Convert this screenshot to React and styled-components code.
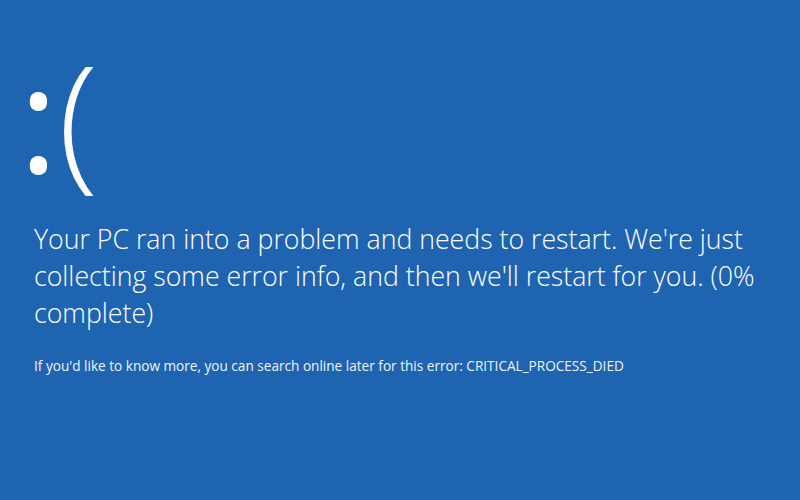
import React from "react";
import styled, { createGlobalStyle } from "styled-components";

const GlobalStyle = createGlobalStyle`
  html, body {
    margin: 0;
    padding: 0;
    background: #1f64b1;
  }
`;

const Screen = styled.div`
  width: 800px;
  height: 500px;
  box-sizing: border-box;
  background: #1f64b1;
  color: #ffffff;
  font-family: "Open Sans", "Noto Sans", sans-serif;
  padding: 26px 0 0 34px;
  display: flex;
  flex-direction: column;
  overflow: hidden;
`;

const Face = styled.div`
  font-size: 148px;
  line-height: 180px;
  height: 194px;
  margin-left: -15px;
  white-space: nowrap;
`;

const Glyph = styled.span`
  font-weight: ${(p) => p.$weight};
`;

const Message = styled.div`
  font-size: 26.7px;
  font-weight: 300;
  line-height: 37px;
  display: flex;
  flex-direction: column;
`;

const Line = styled.span`
  white-space: nowrap;
`;

const Detail = styled.div`
  margin-top: 26px;
  font-size: 13.6px;
  font-weight: 400;
  line-height: 18px;
  white-space: nowrap;
  color: #eef3fa;
`;

export default function App() {
  return (
    <>
      <GlobalStyle />
      <Screen>
        <Face>
          <Glyph $weight={500}>:</Glyph>
          <Glyph $weight={300}>(</Glyph>
        </Face>
        <Message>
          <Line>Your PC ran into a problem and needs to restart. We're just</Line>
          <Line>collecting some error info, and then we'll restart for you. (0%</Line>
          <Line>complete)</Line>
        </Message>
        <Detail>
          If you'd like to know more, you can search online later for this error: CRITICAL_PROCESS_DIED
        </Detail>
      </Screen>
    </>
  );
}
